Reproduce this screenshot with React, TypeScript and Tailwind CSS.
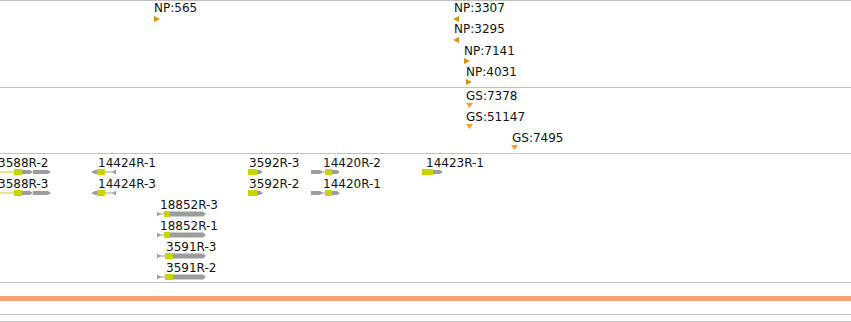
import React from "react";

const GREEN = "#c6d400";
const GRAY = "#9c9c9c";

type Marker = { label: string; x: number; top: number; ax: number; atop: number; dir: "right" | "left" | "down" };

const variants: Marker[] = [
  { label: "NP:565", x: 154, top: 0, ax: 154, atop: 15, dir: "right" },
  { label: "NP:3307", x: 454, top: 0, ax: 453, atop: 15, dir: "left" },
  { label: "NP:3295", x: 454, top: 21, ax: 453, atop: 36, dir: "left" },
  { label: "NP:7141", x: 464, top: 43, ax: 464, atop: 57, dir: "right" },
  { label: "NP:4031", x: 466, top: 64, ax: 466, atop: 78, dir: "right" },
];

const snps: Marker[] = [
  { label: "GS:7378", x: 466, top: 1, ax: 466, atop: 15, dir: "down" },
  { label: "GS:51147", x: 466, top: 22, ax: 466, atop: 36, dir: "down" },
  { label: "GS:7495", x: 512, top: 43, ax: 511, atop: 57, dir: "down" },
];

type Gene = { label: string; lx: number; row: number; kind: string; gx: number };

const genes: Gene[] = [
  { label: "3588R-2", lx: -2, row: 0, kind: "a", gx: 0 },
  { label: "3588R-3", lx: -2, row: 1, kind: "a", gx: 0 },
  { label: "14424R-1", lx: 98, row: 0, kind: "b", gx: 91 },
  { label: "14424R-3", lx: 98, row: 1, kind: "b", gx: 91 },
  { label: "3592R-3", lx: 249, row: 0, kind: "c", gx: 248 },
  { label: "3592R-2", lx: 249, row: 1, kind: "c", gx: 248 },
  { label: "14420R-2", lx: 323, row: 0, kind: "d", gx: 311 },
  { label: "14420R-1", lx: 323, row: 1, kind: "d", gx: 311 },
  { label: "14423R-1", lx: 426, row: 0, kind: "e", gx: 422 },
  { label: "18852R-3", lx: 160, row: 2, kind: "f", gx: 157 },
  { label: "18852R-1", lx: 160, row: 3, kind: "f", gx: 157 },
  { label: "3591R-3", lx: 166, row: 4, kind: "g", gx: 157 },
  { label: "3591R-2", lx: 166, row: 5, kind: "g", gx: 157 },
];

function Arrow({ dir, color }: { dir: string; color: string }) {
  if (dir === "down")
    return (
      <svg width="7" height="5" viewBox="0 0 7 5">
        <polygon points="0,0 7,0 3.5,5" fill={color} />
      </svg>
    );
  return (
    <svg width="6" height="6" viewBox="0 0 6 6">
      {dir === "right" ? (
        <polygon points="0,0 6,3 0,6" fill={color} />
      ) : (
        <polygon points="6,0 0,3 6,6" fill={color} />
      )}
    </svg>
  );
}

// gene models, drawn in local px from the feature start
function GeneGlyph({ kind }: { kind: string }) {
  switch (kind) {
    case "a":
      return (
        <svg width="52" height="6" viewBox="0 0 52 6">
          <rect x="0" y="2.5" width="14" height="1" fill={GREEN} />
          <rect x="14" y="0" width="8" height="6" fill={GREEN} />
          <polygon points="22,1 30,1 33,3 30,5 22,5" fill={GRAY} />
          <polygon points="33,1 48,1 51,3 48,5 33,5" fill={GRAY} />
        </svg>
      );
    case "b":
      return (
        <svg width="26" height="6" viewBox="0 0 26 6">
          <polygon points="0,3 4,1 6,1 6,5 4,5" fill={GRAY} />
          <rect x="6" y="0" width="8" height="6" fill={GREEN} />
          <rect x="14" y="2.5" width="8" height="1" fill={GRAY} />
          <polygon points="21,3 25,0.5 25,5.5" fill={GRAY} />
        </svg>
      );
    case "c":
      return (
        <svg width="16" height="6" viewBox="0 0 16 6">
          <rect x="0" y="0" width="9" height="6" fill={GREEN} />
          <polygon points="9,1 12,1 15,3 12,5 9,5" fill={GRAY} />
        </svg>
      );
    case "d":
      return (
        <svg width="30" height="6" viewBox="0 0 30 6">
          <polygon points="0,1 9,1 12,3 9,5 0,5" fill={GRAY} />
          <rect x="11" y="2.5" width="3" height="1" fill={GRAY} />
          <rect x="14" y="0" width="7" height="6" fill={GREEN} />
          <polygon points="21,1 26,1 29,3 26,5 21,5" fill={GRAY} />
        </svg>
      );
    case "e":
      return (
        <svg width="22" height="6" viewBox="0 0 22 6">
          <rect x="0" y="0" width="11" height="6" fill={GREEN} />
          <polygon points="11,1 18,1 21,3 18,5 11,5" fill={GRAY} />
        </svg>
      );
    case "f":
      return (
        <svg width="50" height="6" viewBox="0 0 50 6">
          <polygon points="0,0.5 4,3 0,5.5" fill={GRAY} />
          <rect x="0" y="2.5" width="7" height="1" fill={GRAY} />
          <rect x="7" y="0" width="6" height="6" fill={GREEN} />
          <polygon points="13,0.5 46,0.5 49,3 46,5.5 13,5.5" fill={GRAY} />
        </svg>
      );
    default:
      return (
        <svg width="50" height="6" viewBox="0 0 50 6">
          <polygon points="0,0.5 4,3 0,5.5" fill={GRAY} />
          <rect x="0" y="2.5" width="8" height="1" fill={GRAY} />
          <rect x="8" y="0" width="8" height="6" fill={GREEN} />
          <polygon points="16,0.5 46,0.5 49,3 46,5.5 16,5.5" fill={GRAY} />
        </svg>
      );
  }
}

function MarkerTrack({ items, color, height }: { items: Marker[]; color: string; height: string }) {
  return (
    <div className={`relative border-t border-[#c0c0c0] ${height}`}>
      {items.map((m) => (
        <React.Fragment key={m.label}>
          <span className="absolute whitespace-nowrap leading-[14px]" style={{ left: m.x, top: m.top }}>
            {m.label}
          </span>
          <div className="absolute flex" style={{ left: m.ax, top: m.atop }}>
            <Arrow dir={m.dir} color={color} />
          </div>
        </React.Fragment>
      ))}
    </div>
  );
}

export default function App() {
  return (
    <div className="w-[851px] h-[322px] overflow-hidden bg-white text-[12px] text-[#111] font-['DejaVu_Sans',sans-serif]">
      <MarkerTrack items={variants} color="#d4920c" height="h-[87px]" />
      <MarkerTrack items={snps} color="#f0a22a" height="h-[66px]" />

      <div className="relative h-[130px] border-y border-[#c0c0c0]">
        {genes.map((g) => (
          <React.Fragment key={g.label}>
            <span className="absolute whitespace-nowrap leading-[14px]" style={{ left: g.lx, top: 2 + g.row * 21 }}>
              {g.label}
            </span>
            <div className="absolute flex" style={{ left: g.gx, top: 15 + g.row * 21 }}>
              <GeneGlyph kind={g.kind} />
            </div>
          </React.Fragment>
        ))}
      </div>

      <div className="h-[13px]" />
      <div className="h-[5px] bg-[#f4a470]" />
      <div className="h-[13px]" />
      <div className="h-[7px] border-t border-[#c0c0c0]" />
      <div className="h-px bg-[#c0c0c0]" />
    </div>
  );
}
